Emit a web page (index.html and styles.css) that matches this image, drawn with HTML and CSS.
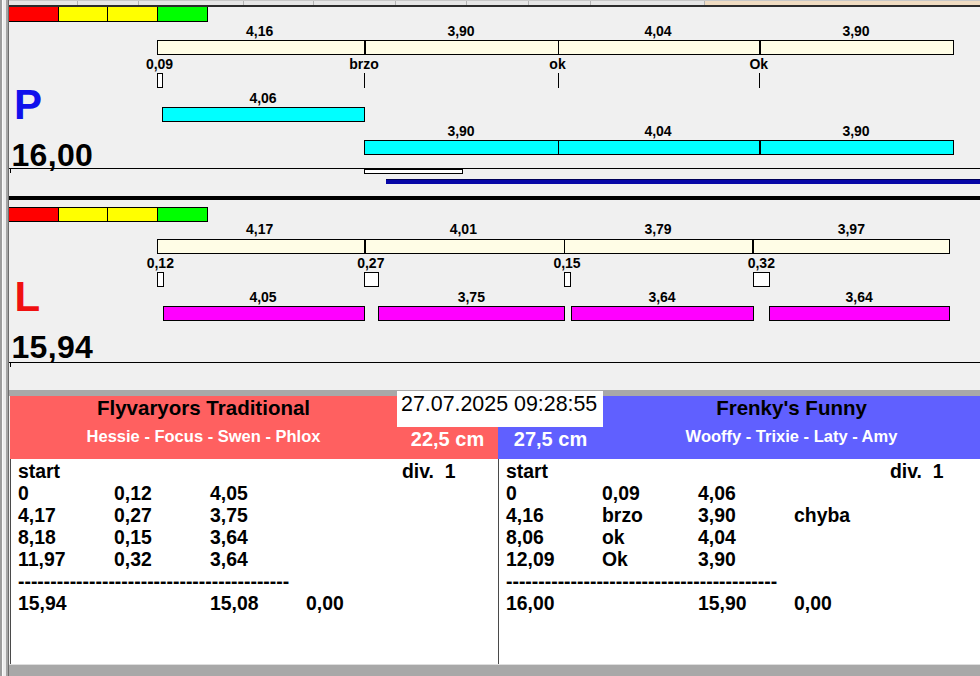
FILE: index.html
```html
<!DOCTYPE html>
<html lang="cs">
<head>
<meta charset="utf-8">
<title>Flyball</title>
<link rel="stylesheet" href="styles.css">
</head>
<body>
<div class="app">
  <div class="edge"></div>
  <div class="main">
    <div class="strip">
      <span></span><span></span><span></span><span></span><span></span><span></span><span></span><span></span><span></span><span class="beige-tab"></span>
    </div>

    <div class="lane lane-p">
      <div class="cbar"><span class="c-red"></span><span class="c-yel"></span><span class="c-yel"></span><span class="c-grn"></span></div>

      <span class="lbl p-r1" style="left:250.7px">4,16</span>
      <span class="lbl p-r1" style="left:452px">3,90</span>
      <span class="lbl p-r1" style="left:649px">4,04</span>
      <span class="lbl p-r1" style="left:847px">3,90</span>

      <div class="seg beige p-beige" style="left:148px;width:208px"></div>
      <div class="seg beige p-beige" style="left:356px;width:194px"></div>
      <div class="seg beige p-beige" style="left:549px;width:202px"></div>
      <div class="seg beige p-beige" style="left:751px;width:194px"></div>

      <span class="lbl p-r2" style="left:150.5px">0,09</span>
      <span class="lbl p-r2" style="left:355px">brzo</span>
      <span class="lbl p-r2" style="left:548.5px">ok</span>
      <span class="lbl p-r2" style="left:749.8px">Ok</span>

      <div class="seg gap p-gap" style="left:148px;width:6px"></div>
      <div class="tick p-gap" style="left:355px"></div>
      <div class="tick p-gap" style="left:549px"></div>
      <div class="tick p-gap" style="left:750px"></div>

      <div class="side side-p">P</div>

      <span class="lbl p-r3" style="left:254px">4,06</span>
      <div class="seg cyan p-run1" style="left:153px;width:203px"></div>

      <span class="lbl p-r4" style="left:452px">3,90</span>
      <span class="lbl p-r4" style="left:649px">4,04</span>
      <span class="lbl p-r4" style="left:847px">3,90</span>
      <div class="seg cyan p-run2" style="left:355px;width:195px"></div>
      <div class="seg cyan p-run2" style="left:549px;width:202px"></div>
      <div class="seg cyan p-run2" style="left:751px;width:194px"></div>

      <div class="total p-total">16,00</div>
      <div class="hline p-hline"></div>
      <div class="mini-tick p-mini"></div>
      <div class="outline p-outline" style="left:355px;width:99px"></div>
      <div class="progress p-progress" style="left:377px"></div>
    </div>

    <div class="sep"></div>

    <div class="lane lane-l">
      <div class="cbar l-cbar"><span class="c-red"></span><span class="c-yel"></span><span class="c-yel"></span><span class="c-grn"></span></div>

      <span class="lbl l-r1" style="left:250.7px">4,17</span>
      <span class="lbl l-r1" style="left:454.3px">4,01</span>
      <span class="lbl l-r1" style="left:649px">3,79</span>
      <span class="lbl l-r1" style="left:842.3px">3,97</span>

      <div class="seg beige l-beige" style="left:148px;width:208px"></div>
      <div class="seg beige l-beige" style="left:356px;width:200px"></div>
      <div class="seg beige l-beige" style="left:555px;width:189px"></div>
      <div class="seg beige l-beige" style="left:744px;width:197px"></div>

      <span class="lbl l-r2" style="left:151.3px">0,12</span>
      <span class="lbl l-r2" style="left:361.8px">0,27</span>
      <span class="lbl l-r2" style="left:558px">0,15</span>
      <span class="lbl l-r2" style="left:752.3px">0,32</span>

      <div class="seg gap l-gap" style="left:148px;width:7px"></div>
      <div class="seg gap l-gap" style="left:355px;width:15px"></div>
      <div class="seg gap l-gap" style="left:555px;width:7px"></div>
      <div class="seg gap l-gap" style="left:744px;width:17px"></div>

      <div class="side side-l">L</div>

      <span class="lbl l-r3" style="left:254px">4,05</span>
      <span class="lbl l-r3" style="left:462.3px">3,75</span>
      <span class="lbl l-r3" style="left:653px">3,64</span>
      <span class="lbl l-r3" style="left:850.2px">3,64</span>
      <div class="seg mag l-run" style="left:154px;width:202px"></div>
      <div class="seg mag l-run" style="left:369px;width:187px"></div>
      <div class="seg mag l-run" style="left:562px;width:183px"></div>
      <div class="seg mag l-run" style="left:760px;width:181px"></div>

      <div class="total l-total">15,94</div>
      <div class="hline l-hline"></div>
      <div class="mini-tick l-mini"></div>
    </div>

    <div class="bottom">
      <div class="band"></div>
      <div class="teams">
        <section class="team team-a">
          <header class="head head-a">
            <div class="title">
              <div class="name">Flyvaryors Traditional</div>
              <div class="dogs">Hessie - Focus - Swen - Phlox</div>
            </div>
            <div class="cm">22,5 cm</div>
          </header>
          <div class="list">
            <div class="rows">
              <span>start</span><span></span><span></span><span></span><span class="pre">div.  1</span>
              <span>0</span><span>0,12</span><span>4,05</span><span></span><span></span>
              <span>4,17</span><span>0,27</span><span>3,75</span><span></span><span></span>
              <span>8,18</span><span>0,15</span><span>3,64</span><span></span><span></span>
              <span>11,97</span><span>0,32</span><span>3,64</span><span></span><span></span>
              <span class="dash">------------------------------------------</span>
              <span>15,94</span><span></span><span>15,08</span><span>0,00</span><span></span>
            </div>
            <div class="scroll">
              <svg width="9" height="5" viewBox="0 0 9 5"><polyline points="0.5,4.5 4.5,0.5 8.5,4.5" fill="none" stroke="#bcbcbc" stroke-width="1"/></svg>
              <svg width="9" height="5" viewBox="0 0 9 5"><polyline points="0.5,0.5 4.5,4.5 8.5,0.5" fill="none" stroke="#bcbcbc" stroke-width="1"/></svg>
            </div>
          </div>
        </section>
        <section class="team team-b">
          <header class="head head-b">
            <div class="cm">27,5 cm</div>
            <div class="title">
              <div class="name">Frenky's Funny</div>
              <div class="dogs">Wooffy - Trixie - Laty - Amy</div>
            </div>
          </header>
          <div class="list">
            <div class="rows">
              <span>start</span><span></span><span></span><span></span><span class="pre">div.  1</span>
              <span>0</span><span>0,09</span><span>4,06</span><span></span><span></span>
              <span>4,16</span><span>brzo</span><span>3,90</span><span>chyba</span><span></span>
              <span>8,06</span><span>ok</span><span>4,04</span><span></span><span></span>
              <span>12,09</span><span>Ok</span><span>3,90</span><span></span><span></span>
              <span class="dash">------------------------------------------</span>
              <span>16,00</span><span></span><span>15,90</span><span>0,00</span><span></span>
            </div>
            <div class="scroll">
              <svg width="9" height="5" viewBox="0 0 9 5"><polyline points="0.5,4.5 4.5,0.5 8.5,4.5" fill="none" stroke="#bcbcbc" stroke-width="1"/></svg>
              <svg width="9" height="5" viewBox="0 0 9 5"><polyline points="0.5,0.5 4.5,4.5 8.5,0.5" fill="none" stroke="#bcbcbc" stroke-width="1"/></svg>
            </div>
          </div>
        </section>
        <div class="datebox">27.07.2025 09:28:55</div>
      </div>
      <div class="foot"></div>
    </div>
  </div>
</div>
</body>
</html>
```

FILE: styles.css
```css
* { box-sizing: border-box; }

html, body {
  margin: 0;
  padding: 0;
  background: #f0f0f0;
}

body {
  font-family: "Liberation Sans", Arial, sans-serif;
  color: #000;
  overflow: hidden;
}

.app {
  display: flex;
  width: 980px;
  height: 676px;
}

.edge {
  width: 9px;
  flex: none;
  background: linear-gradient(to right,
    #9c9c9c 0 2px, #fbfbfb 2px 3px, #ececec 3px 6px,
    #a4a4a4 6px 8px, #6c6c6c 8px 9px);
}

.main {
  width: 971px;
  display: flex;
  flex-direction: column;
}

/* top toolbar remnant */
.strip {
  height: 7px;
  display: grid;
  grid-template-columns: 69px 61px 105px 70px 82px 71px 62px 62px 114px 1fr;
  background: #e6e6e6;
  border-bottom: 2px solid #2c2c2c;
  border-top: 1px solid #c8c8c8;
}
.strip span { border-right: 1px solid #b4b4b4; }
.strip .beige-tab { background: #f0dcc2; border-right: 0; }

/* lanes (free canvas of a race timeline) */
.lane {
  position: relative;
  background: #f0f0f0;
  overflow: hidden;
}
.lane-p { height: 189px; }
.lane-l { height: 190px; }

.sep { height: 4px; background: #000; }

.cbar {
  position: absolute;
  left: 0;
  top: 0;
  display: flex;
  height: 15px;
  border-bottom: 1px solid #000;
}
.l-cbar { top: 7px; border-top: 1px solid #000; }
.cbar span { height: 100%; border-right: 1px solid #000; }
.c-red { width: 50px; background: #ff0000; }
.c-yel { width: 49px; background: #ffff00; }
.c-yel + .c-yel { width: 50px; }
.c-grn { width: 50px; background: #00ff00; }

.lbl {
  position: absolute;
  font-weight: bold;
  font-size: 14px;
  line-height: 14px;
  white-space: nowrap;
  transform: translateX(-50%);
}
.p-r1 { top: 17px; }
.p-r2 { top: 49.5px; }
.p-r3 { top: 83.5px; }
.p-r4 { top: 116.5px; }
.l-r1 { top: 22px; }
.l-r2 { top: 55.5px; }
.l-r3 { top: 89.5px; }

.seg {
  position: absolute;
  height: 15px;
  border: 1px solid #000;
}
.beige { background: #fffde6; }
.cyan { background: #00ffff; }
.mag { background: #ff00ff; }
.gap { background: #ffffff; }

.p-beige { top: 33px; }
.p-gap { top: 66px; }
.p-run1 { top: 100px; }
.p-run2 { top: 133px; }
.l-beige { top: 39px; }
.l-gap { top: 72px; }
.l-run { top: 106px; }

.tick {
  position: absolute;
  width: 1px;
  height: 15px;
  background: #000;
}

.side {
  position: absolute;
  left: 5px;
  font-weight: bold;
  font-size: 42px;
  line-height: 42px;
}
.side-p { top: 77px; color: #1010ec; }
.side-l { top: 75.5px; left: 5.5px; color: #f01010; }

.total {
  position: absolute;
  left: 2.5px;
  font-weight: bold;
  font-size: 32px;
  line-height: 32px;
  letter-spacing: 0.3px;
}
.p-total { top: 131.5px; }
.l-total { top: 131px; }

.hline {
  position: absolute;
  left: 0;
  right: 0;
  height: 1px;
  background: #000;
}
.p-hline { top: 161px; }
.l-hline { top: 162px; }

.mini-tick {
  position: absolute;
  left: 1px;
  width: 1px;
  height: 4px;
  background: #000;
}
.p-mini { top: 162px; }
.l-mini { top: 163px; }

.outline {
  position: absolute;
  top: 162px;
  height: 5px;
  background: #fff;
  border: 1px solid #000;
}

.progress {
  position: absolute;
  top: 172px;
  right: 0;
  height: 5px;
  background: #0606a6;
  border-top: 1px solid #00005a;
}

/* bottom results panel */
.bottom {
  display: flex;
  flex-direction: column;
  flex: 1;
}
.band {
  height: 6px;
  background: #a8a8a8;
}
.teams {
  position: relative;
  display: grid;
  grid-template-columns: 488px 482px;
  margin-left: 1px;
}

.head {
  display: grid;
  height: 63px;
  font-weight: bold;
}
.head-a {
  grid-template-columns: 387px 101px;
  background: #ff6060;
}
.head-b {
  grid-template-columns: 105px 377px;
  background: #6060ff;
}
.title { text-align: center; padding-top: 2px; }
.name { font-size: 20.5px; line-height: 20px; color: #000; }
.dogs { font-size: 16.5px; line-height: 17px; color: #fff; margin-top: 10px; }
.cm {
  padding-top: 33px;
  font-size: 20px;
  line-height: 20px;
  color: #fff;
  text-align: center;
}

.datebox {
  position: absolute;
  left: 387px;
  top: -5px;
  width: 206px;
  height: 36px;
  background: #fff;
  padding: 3px 0 0 4px;
  font-size: 21.4px;
  line-height: 21px;
  white-space: nowrap;
}

.list {
  display: flex;
  height: 205px;
  background: #fff;
  border-left: 1px solid #4a4a4a;
}
.rows {
  flex: 1;
  display: grid;
  grid-template-columns: repeat(5, 96px);
  grid-auto-rows: 22px;
  align-content: start;
  padding: 1px 0 0 7px;
  font-weight: bold;
  font-size: 19.4px;
  line-height: 22px;
  white-space: nowrap;
}
.rows .pre { white-space: pre; }
.rows .dash { grid-column: 1 / -1; }

.scroll {
  width: 17px;
  flex: none;
  background: #f0f0f0;
  display: flex;
  flex-direction: column;
  justify-content: space-between;
  align-items: center;
  padding: 7px 0 7px;
}
.team-a .scroll { width: 18px; }

.foot {
  flex: 1;
  background: #a8a8a8;
  border-top: 1px solid #dedede;
}
```
